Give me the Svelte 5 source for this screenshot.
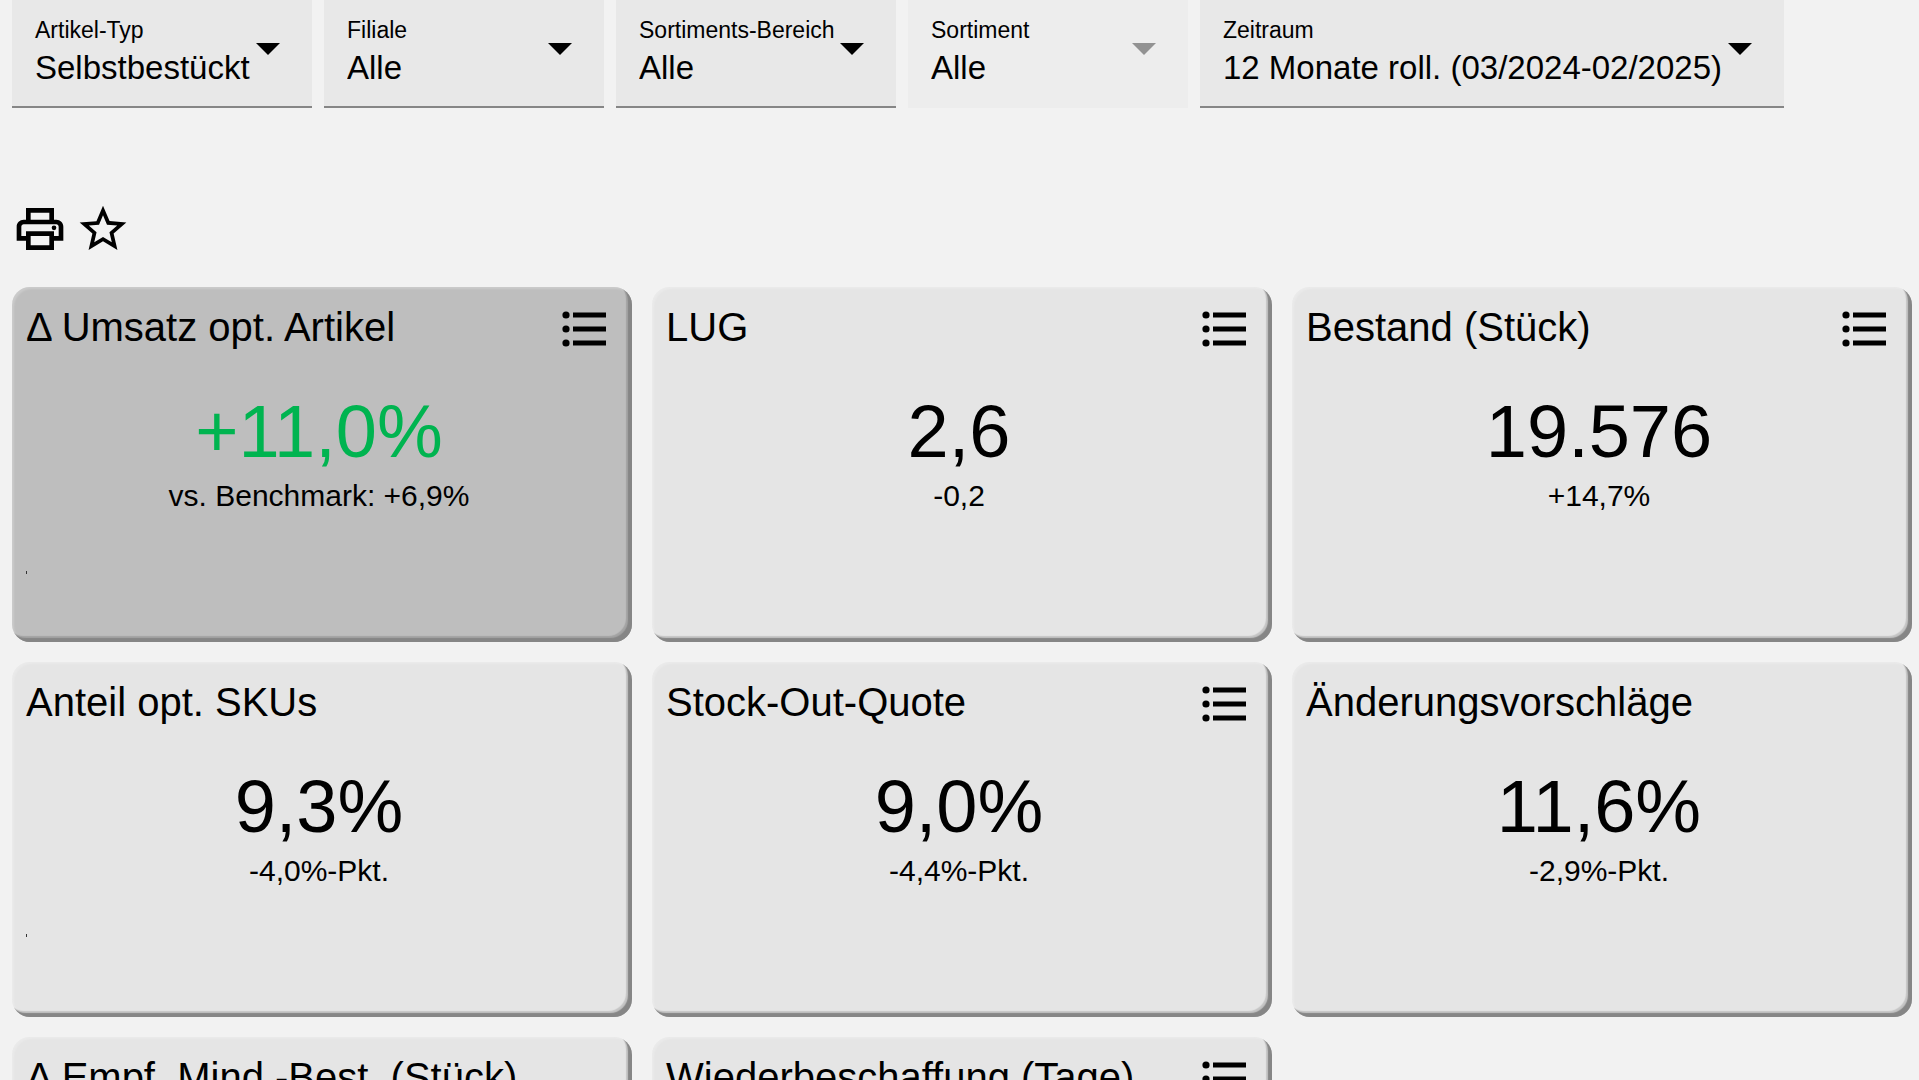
<script>
  const filters = [
    { id: "type", label: "Artikel-Typ", value: "Selbstbestückt", size: "medium" },
    { id: "branch", label: "Filiale", value: "Alle", size: "small" },
    { id: "area", label: "Sortiments-Bereich", value: "Alle", size: "small" },
    { id: "range", label: "Sortiment", value: "Alle", size: "small", disabled: true },
    { id: "period", label: "Zeitraum", value: "12 Monate roll. (03/2024-02/2025)", size: "large" }
  ];

  // trend: height of the single bar above the baseline
  const cards = [
    { title: "Δ Umsatz opt. Artikel", value: "+11,0%", sub: "vs. Benchmark: +6,9%", list: true, active: true, trend: 0 },
    { title: "LUG", value: "2,6", sub: "-0,2", list: true },
    { title: "Bestand (Stück)", value: "19.576", sub: "+14,7%", list: true },
    { title: "Anteil opt. SKUs", value: "9,3%", sub: "-4,0%-Pkt.", trend: 12 },
    { title: "Stock-Out-Quote", value: "9,0%", sub: "-4,4%-Pkt.", list: true },
    { title: "Änderungsvorschläge", value: "11,6%", sub: "-2,9%-Pkt." },
    { title: "Δ Empf. Mind.-Best. (Stück)" },
    { title: "Wiederbeschaffung (Tage)", list: true }
  ];
</script>

<main>
  <form class="filters">
    {#each filters as filter}
      <div class="filter {filter.size}" class:disabled={filter.disabled}>
        <label for={filter.id}>{filter.label}</label>
        <select id={filter.id} disabled={filter.disabled}>
          <option>{filter.value}</option>
        </select>
        <svg class="arrow" viewBox="0 0 24 12" aria-hidden="true">
          <path d="M0 0h24L12 12z" />
        </svg>
      </div>
    {/each}
  </form>

  <div class="toolbar">
    <button aria-label="Drucken">
      <svg viewBox="0 0 24 24">
        <path d="M19 8h-1V3H6v5H5c-1.660 0-3 1.340-3 3v6h4v4h12v-4h4v-6c0-1.660-1.340-3-3-3zM8 5h8v3H8V5zm8 14H8v-4h8v4zm2-4v-2H6v2H4v-4c0-.55.45-1 1-1h14c.55 0 1 .45 1 1v4h-2z" />
        <circle cx="18" cy="11.500" r="1" />
      </svg>
    </button>
    <button aria-label="Favorit">
      <svg viewBox="0 0 24 24">
        <path d="M22 9.240l-7.190-.62L12 2 9.190 8.630 2 9.240l5.460 4.730L5.820 21 12 17.270 18.180 21l-1.630-7.030L22 9.240zM12 15.400l-3.760 2.270 1-4.280-3.320-2.880 4.380-.38L12 6.100l1.710 4.040 4.380.38-3.320 2.880 1 4.280L12 15.400z" />
      </svg>
    </button>
  </div>

  <div class="cards">
    {#each cards as card}
      <section class="card" class:active={card.active}>
        <div class="card-head">
          <h2>{card.title}</h2>
          {#if card.list}
            <button aria-label="Liste">
              <svg viewBox="0 0 44 36">
                <circle cx="4" cy="4" r="3.600" />
                <circle cx="4" cy="18" r="3.600" />
                <circle cx="4" cy="32" r="3.600" />
                <path d="M11 1.500h33v5H11zM11 15.500h33v5H11zM11 29.500h33v5H11z" />
              </svg>
            </button>
          {/if}
        </div>
        {#if card.value}
          <p class="value">{card.value}</p>
          <p class="sub">{card.sub}</p>
        {/if}
        {#if card.trend !== undefined}
          <div class="trend">
            <div class="bar" style="margin-bottom: {card.trend}px"></div>
          </div>
        {/if}
      </section>
    {/each}
  </div>
</main>

<style>
  :global(body) {
    background: #f2f2f2;
    overflow: hidden;
  }

  main {
    font-family: "Liberation Sans", Arial, sans-serif;
    color: #000;
    padding: 0 7px 0 12px;
  }

  .filters {
    display: flex;
    gap: 12px;
  }

  .filter {
    position: relative;
    box-sizing: border-box;
    height: 108px;
    padding: 16px 0 0 23px;
    background: #e8e8e8;
    border-bottom: 2px solid #868686;
  }

  .small {
    flex: 0 1 280px;
  }

  .medium {
    flex: 0 1 300px;
  }

  .large {
    flex: 0 1 584px;
  }

  .disabled {
    background: #ededed;
    border-color: #ededed;
  }

  label {
    display: block;
    font-size: 23px;
    line-height: 28px;
  }

  select {
    display: block;
    width: 100%;
    height: 46px;
    padding: 0;
    border: 0;
    background: none;
    appearance: none;
    font-family: inherit;
    font-size: 33px;
    color: #000;
    opacity: 1;
  }

  .arrow {
    position: absolute;
    top: 43px;
    right: 32px;
    width: 24px;
    height: 12px;
    pointer-events: none;
  }

  .disabled .arrow {
    fill: #929292;
  }

  button {
    display: block;
    padding: 0;
    border: 0;
    background: none;
    cursor: pointer;
  }

  button svg {
    display: block;
  }

  .toolbar {
    display: flex;
    gap: 15px;
    padding: 93px 0 30px 4px;
  }

  .toolbar svg {
    width: 56px;
    height: 56px;
    margin: 0 -4px;
  }

  .cards {
    display: grid;
    grid-template-columns: repeat(3, 1fr);
    grid-auto-rows: 355px;
    gap: 20px;
  }

  .card {
    box-sizing: border-box;
    padding: 16px 20px 0 14px;
    background: #e5e5e5;
    border-radius: 18px;
    box-shadow:
      inset -4px -4px 1px #868686,
      inset -6px -6px 1px rgba(0, 0, 0, 0.14),
      inset 2px 2px 2px rgba(255, 255, 255, 0.2);
  }

  .active {
    background: #bebebe;
  }

  .card-head {
    display: flex;
    align-items: flex-start;
    justify-content: space-between;
    height: 50px;
    padding-right: 6px;
  }

  h2 {
    margin: 0;
    font-size: 40px;
    font-weight: normal;
    line-height: 48px;
  }

  .card-head button {
    padding-top: 8px;
  }

  .card-head svg {
    width: 44px;
    height: 36px;
  }

  p {
    margin: 0;
    text-align: center;
  }

  .value {
    margin-top: 37px;
    font-size: 74px;
    line-height: 84px;
  }

  .active .value {
    color: #00b450;
  }

  .sub {
    font-size: 30px;
    line-height: 44px;
  }

  .trend {
    display: flex;
    align-items: flex-end;
    height: 56px;
  }

  .bar {
    width: 1px;
    height: 3px;
    background: #333;
  }
</style>
